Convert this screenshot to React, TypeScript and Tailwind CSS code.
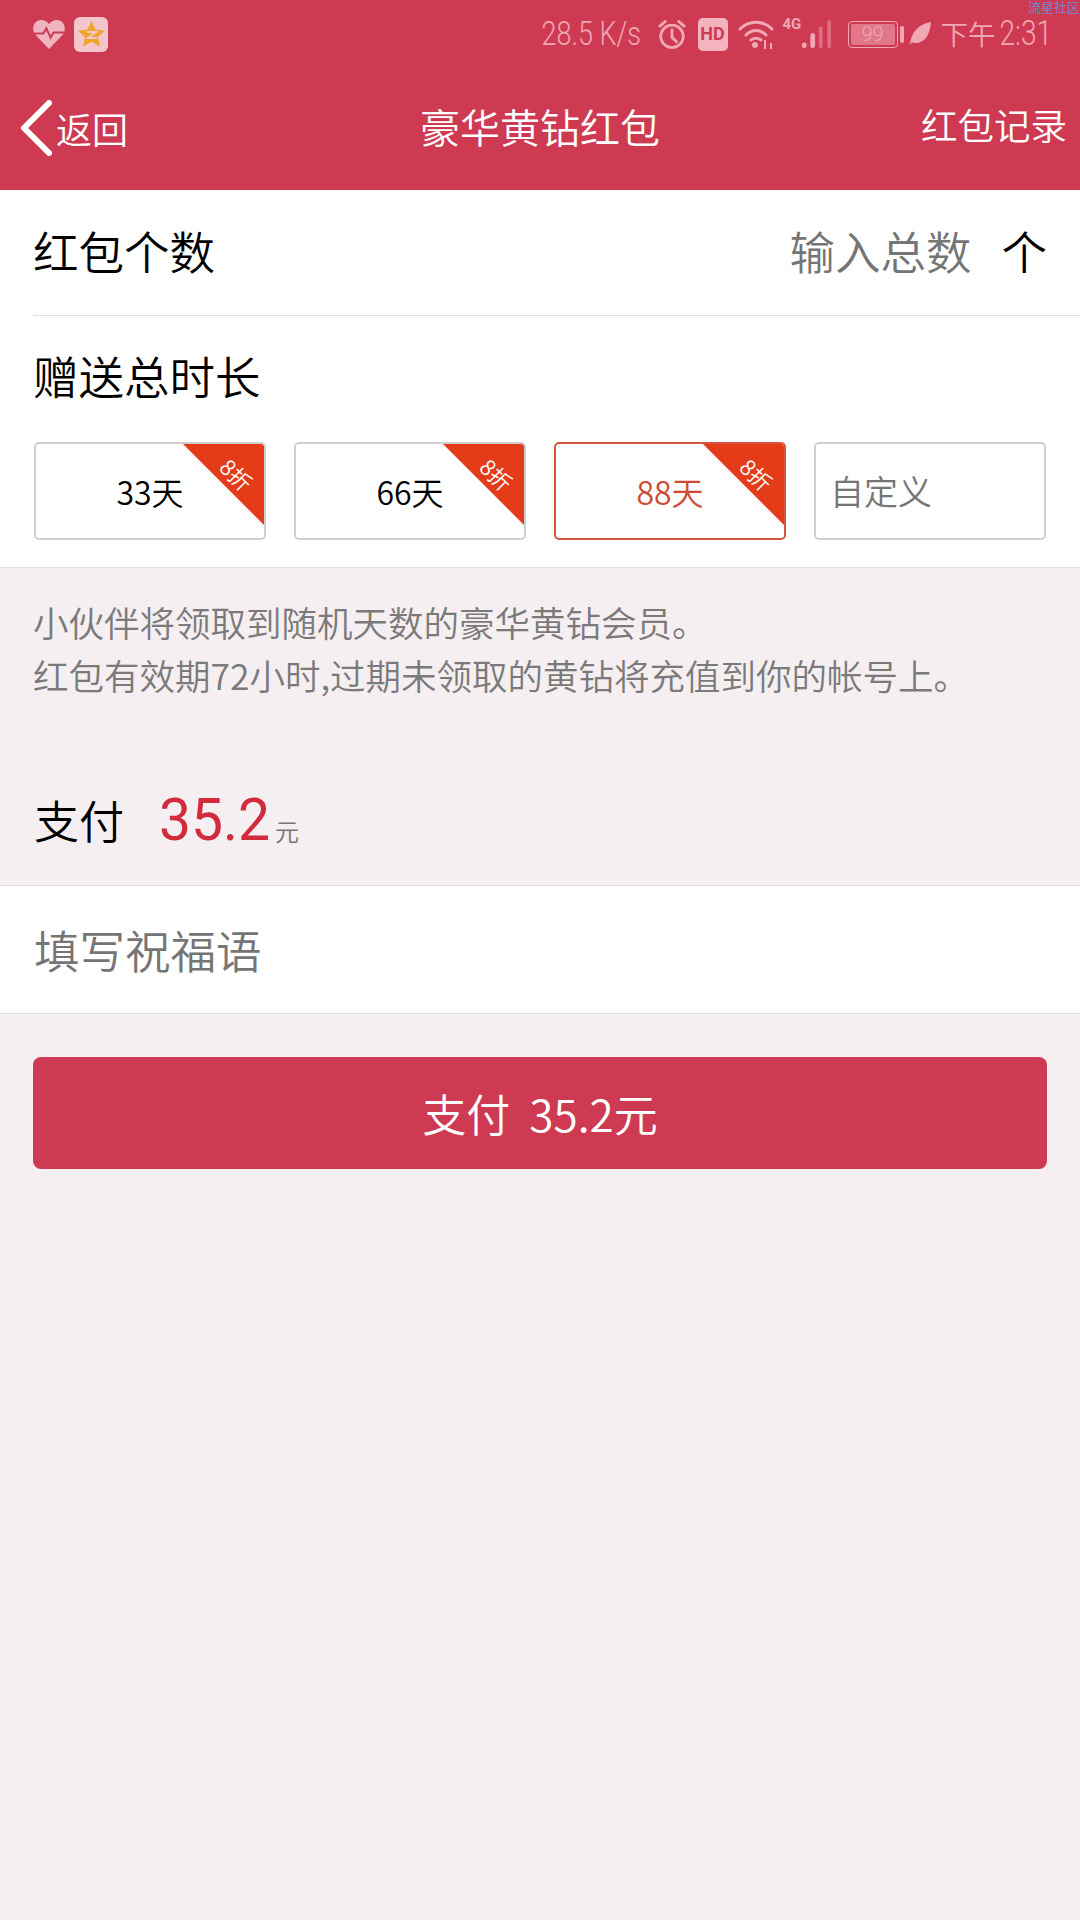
import React from "react";

const cjk = { fontFamily: "'Noto Sans CJK SC', sans-serif" };

function StatusIcons() {
  return (
    <div className="flex items-center">
      <span className="inline-block w-[102px] scale-y-[1.25] font-['Roboto'] font-light text-[27px] leading-none whitespace-nowrap">28.5 K/s</span>
      <svg className="ml-[13px]" width="30" height="33" viewBox="0 0 32 34" fill="none" stroke="currentColor" strokeWidth="3">
        <circle cx="16" cy="19" r="12" />
        <path d="M16 12v8l5 5M3 8l6-5M29 8l-6-5" strokeLinecap="round" />
      </svg>
      <div className="ml-[11px] w-[30px] h-[33px] rounded-[5px] bg-[#f3b4bf] flex items-center justify-center text-[#cf3a53] font-['Roboto'] font-bold text-[18px] leading-none">HD</div>
      <svg className="ml-[9px]" width="38" height="32" viewBox="0 0 36 32" fill="none" stroke="currentColor" strokeWidth="3">
        <path d="M2 11c9-9 23-9 32 0M8 17c6-6 14-6 20 0M13 22c3-2 7-2 10 0" strokeLinecap="round" />
        <circle cx="17" cy="27" r="3" fill="currentColor" stroke="none" />
        <path d="M27 22v9M33 25v6" strokeWidth="2" />
      </svg>
      <div className="ml-[8px] w-[17px] self-start mt-[-1px] font-['Roboto'] font-bold text-[15px] leading-none">4G</div>
      <svg width="32" height="32" viewBox="0 0 34 32" fill="currentColor">
        <rect x="2" y="25" width="5" height="6" rx="2.5" />
        <rect x="11" y="15" width="5" height="16" rx="2.5" />
        <rect x="20" y="8" width="4" height="23" rx="2" opacity="0.45" />
        <rect x="29" y="1" width="4" height="30" rx="2" opacity="0.45" />
      </svg>
      <div className="ml-[16px] w-[50px] h-[27px] rounded-[4px] border border-[#f0a8b4] p-[2px]">
        <div className="h-full w-full rounded-[2px] bg-[#e0788a] flex items-center justify-center font-['Roboto'] font-light text-[20px] leading-none">99</div>
      </div>
      <div className="ml-[2px] w-[4px] h-[17px] rounded-[2px] bg-[#f0a8b4]" />
      <svg className="ml-[6px]" width="22" height="26" viewBox="0 0 22 26" fill="currentColor">
        <path d="M21 1C20 14 15 22 5 22c-1 0-2 0-3-1L0 24l-0-1C1 12 8 3 21 1z" />
      </svg>
      <span className="ml-[9px] text-[27.500px] leading-none" style={cjk}>下午</span>
      <span className="ml-[4px] inline-block scale-y-[1.25] font-['Roboto'] font-light text-[28px] leading-none">2:31</span>
    </div>
  );
}

function Discount({ days, active }: { days: string; active?: boolean }) {
  return (
    <div className={`relative h-[98px] w-[232px] flex items-center justify-center rounded-[5px] border-2 bg-white overflow-hidden ${active ? "border-[#d8543f]" : "border-[#cfcfcf]"}`}>
      <span className={`text-[32px] leading-none ${active ? "text-[#cf4a35]" : "text-black"}`}>
        {days}天
      </span>
      <div className="absolute top-[-2px] right-[-2px] w-[85px] h-[85px] bg-[#e43b18] [clip-path:polygon(0_0,100%_0,100%_100%)]" />
      <span className="absolute top-[19px] right-[10px] rotate-45 text-white text-[22px] leading-none">8折</span>
    </div>
  );
}

export default function App() {
  return (
    <div className="relative min-h-[1920px] w-[1080px] bg-[#f5eff2] flex flex-col font-[350]" style={cjk}>
      <div className="absolute top-0 right-0 text-[13px] font-normal leading-none text-[#6f86cf]">流星社区</div>

      <header className="bg-[#cf3a53] h-[190px] flex flex-col">
        <div className="h-[68px] flex items-center justify-between pl-[33px] pr-[28px] text-[#f0a8b4]">
          <div className="flex items-center gap-[9px]">
            <svg width="32" height="30" viewBox="0 0 31 29">
              <path d="M15.5 29 2 15C-2 9 1 1 8 1c3 0 6 2 7.500 4C17 3 20 1 23 1c7 0 10 8 6 14z" fill="#f0b4c0" />
              <path d="M1 14h9l3-5 4 9 3-5h10" fill="none" stroke="#cf3a53" strokeWidth="2" />
            </svg>
            <div className="w-[34px] h-[35px] rounded-[6px] bg-[#f3c6cc] flex items-center justify-center">
              <svg width="27" height="26" viewBox="0 0 27 26">
                <path d="M13.500 0l4 8.500 9.500 1.200-7 6.300 2 9.500-8.500-4.700L5 25.500l2-9.500-7-6.300 9.500-1.200z" fill="#f0a52a" />
                <path d="M9 11h9l-8 6h9" fill="none" stroke="#f3c6cc" strokeWidth="2" />
              </svg>
            </div>
          </div>
          <StatusIcons />
        </div>
        <div className="flex-1 flex items-center text-white pb-[2px]">
          <div className="flex-1 flex items-center pl-[20px]">
            <svg width="33" height="56" viewBox="0 0 33 56" fill="none" stroke="#fff" strokeWidth="6" strokeLinecap="round" strokeLinejoin="round">
              <path d="M29 3 4 28l25 25" />
            </svg>
            <span className="ml-[3px] text-[36px] leading-none">返回</span>
          </div>
          <h1 className="text-[40px] leading-none font-[350] mr-[7px] pb-[4px]">豪华黄钻红包</h1>
          <div className="flex-1 flex justify-end pr-[13px] pb-[6px]">
            <span className="text-[36.500px] leading-none">红包记录</span>
          </div>
        </div>
      </header>

      <section className="bg-white pl-[33px] h-[378px] flex flex-col border-b border-[#dedede]">
        <div className="h-[126px] flex items-center border-b border-[#dedede] pr-[33px] pb-[4px] text-[45.500px] leading-none">
          <span className="text-black">红包个数</span>
          <span className="ml-auto text-[#757575]">输入总数</span>
          <span className="ml-[30px] text-black">个</span>
        </div>
        <div className="h-[126px] flex items-center pb-[6px] text-[45.500px] leading-none text-black">赠送总时长</div>
        <div className="flex gap-[28px] ml-[1px]">
          <Discount days="33" />
          <Discount days="66" />
          <Discount days="88" active />
          <div className="h-[98px] w-[232px] flex items-center pl-[14px] rounded-[5px] border-2 border-[#cfcfcf] text-[34px] leading-none text-[#757575]">自定义</div>
        </div>
      </section>

      <div className="px-[33px] pt-[27px] text-[35.500px] leading-[53px] text-[#7a7a7a]">
        <p>小伙伴将领取到随机天数的豪华黄钻会员。</p>
        <p>红包有效期72小时,过期未领取的黄钻将充值到你的帐号上。</p>
      </div>

      <div className="mt-[53px] h-[132px] flex items-center pl-[34px] border-b border-[#dedede]">
        <span className="text-[45px] leading-none text-black">支付</span>
        <span className="ml-[35px] inline-block w-[108px] origin-left scale-x-[0.95] font-['Roboto'] font-normal text-[#d22c3c] text-[60px] leading-none whitespace-nowrap">35.2</span>
        <span className="ml-[8px] mt-[22px] text-[24px] leading-none text-[#757575]">元</span>
      </div>

      <div className="h-[128px] bg-white flex items-center pl-[34px] border-b border-[#dedede] text-[45.500px] leading-none text-[#757575]">填写祝福语</div>

      <div className="px-[33px] pt-[43px]">
        <button className="w-full h-[112px] rounded-[8px] bg-[#cf3a53] text-white text-[44px] font-[350] leading-none" style={cjk}>
          支付<span className="ml-[19px]">35.2</span>元
        </button>
      </div>
    </div>
  );
}
